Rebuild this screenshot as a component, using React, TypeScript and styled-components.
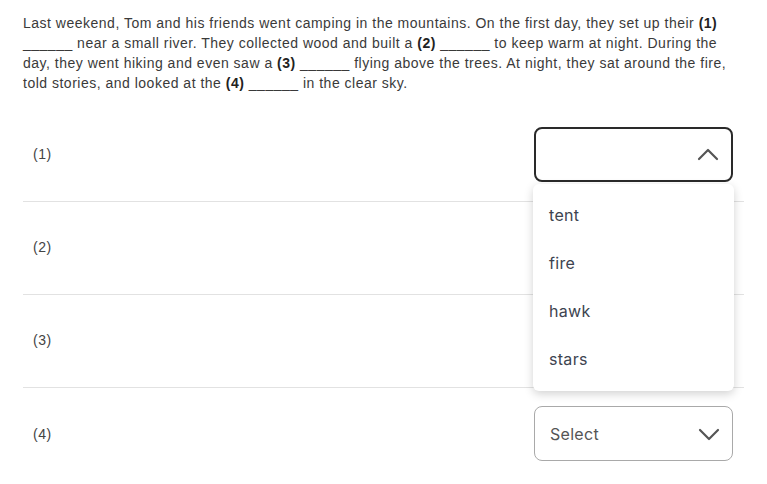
import React, { useState } from "react";
import styled, { createGlobalStyle } from "styled-components";

const GlobalStyle = createGlobalStyle`
  body {
    margin: 0;
    background: #fff;
    font-family: "Liberation Sans", Arial, sans-serif;
  }
`;

const Page = styled.div`
  padding: 13px 23px 0;
`;

const Passage = styled.p`
  margin: 0 0 16px;
  font-size: 14px;
  line-height: 20px;
  letter-spacing: 0.5px;
  color: #3a3a3a;
`;

const Num = styled.b`
  color: #222;
`;

const Row = styled.div<{ $last?: boolean }>`
  display: flex;
  align-items: center;
  justify-content: space-between;
  height: 93px;
  padding: 0 11px 2px 10px;
  border-bottom: ${(p) => (p.$last ? "none" : "1px solid #e2e2e2")};
  box-sizing: border-box;
`;

const Label = styled.span`
  font-size: 14px;
  letter-spacing: 0.5px;
  color: #444;
`;

const SelectWrap = styled.div`
  position: relative;
  width: 199px;
`;

const SelectBox = styled.button<{ $open?: boolean }>`
  display: flex;
  align-items: center;
  justify-content: space-between;
  width: 100%;
  height: 55px;
  padding: 0 12px 0 15px;
  box-sizing: border-box;
  background: #fff;
  border: ${(p) => (p.$open ? "2px solid #2a2a2a" : "1px solid #a9a9a9")};
  border-radius: 8px;
  font-family: Inter, "Open Sans", sans-serif;
  font-size: 16px;
  letter-spacing: 0.3px;
  color: #555;
  cursor: pointer;
`;

const Menu = styled.ul`
  position: absolute;
  top: calc(100% + 2px);
  left: -1px;
  right: -1px;
  margin: 0;
  padding: 7px 0 8px;
  list-style: none;
  background: #fff;
  border-radius: 6px;
  box-shadow: 0 3px 10px rgba(0, 0, 0, 0.18);
  z-index: 10;
`;

const Option = styled.li`
  height: 48px;
  display: flex;
  align-items: center;
  padding: 0 16px;
  font-family: Inter, "Open Sans", sans-serif;
  font-size: 16px;
  letter-spacing: 0.3px;
  color: #3d4450;
  cursor: pointer;
`;

const Chevron = ({ up }: { up?: boolean }) => (
  <svg width="22" height="14" viewBox="0 0 22 14" fill="none">
    <polyline
      points={up ? "2,12 11,3 20,12" : "2,3 11,12 20,3"}
      stroke="#555"
      strokeWidth="2.2"
      strokeLinecap="round"
      strokeLinejoin="round"
    />
  </svg>
);

const words = ["tent", "fire", "hawk", "stars"];

const Dropdown = ({ open, onToggle }: { open: boolean; onToggle: () => void }) => (
  <SelectWrap>
    <SelectBox $open={open} onClick={onToggle}>
      <span>{open ? "" : "Select"}</span>
      <Chevron up={open} />
    </SelectBox>
    {open && (
      <Menu>
        {words.map((w) => (
          <Option key={w}>{w}</Option>
        ))}
      </Menu>
    )}
  </SelectWrap>
);

export default function App() {
  const [openIdx, setOpenIdx] = useState<number | null>(0);

  return (
    <Page>
      <GlobalStyle />
      <Passage>
        Last weekend, Tom and his friends went camping in the mountains. On the first day, they set up their{" "}
        <Num>(1)</Num> ______ near a small river. They collected wood and built a <Num>(2)</Num> ______ to keep
        warm at night. During the day, they went hiking and even saw a <Num>(3)</Num> ______ flying above the
        trees. At night, they sat around the fire, told stories, and looked at the <Num>(4)</Num> ______ in the
        clear sky.
      </Passage>
      {[1, 2, 3, 4].map((n, i) => (
        <Row key={n} $last={n === 4}>
          <Label>({n})</Label>
          {(i === 0 || i === 3) && (
            <Dropdown
              open={openIdx === i}
              onToggle={() => setOpenIdx(openIdx === i ? null : i)}
            />
          )}
        </Row>
      ))}
    </Page>
  );
}
